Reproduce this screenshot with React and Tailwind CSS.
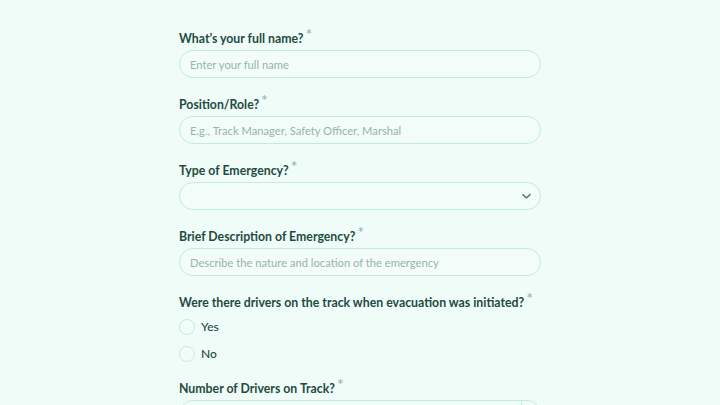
import React from "react";

const Label = ({ children }) => (
  <p className="h-[16px] text-[12.3px] leading-[16px] font-bold text-[#1f4b41] whitespace-nowrap">
    {children}
    <span className="relative top-[-3px] ml-[2px] text-[#8bb0a6] text-[16px] leading-none font-normal">*</span>
  </p>
);

const TextField = ({ placeholder }) => (
  <input
    className="block w-full h-[28px] rounded-full border border-[#c2ece1] bg-[#f2fdfa] px-[10px] text-[11.2px] text-[#1d4a40] placeholder:text-[#97b3ac] outline-none"
    placeholder={placeholder}
  />
);

const Field = ({ label, children }) => (
  <div className="flex flex-col gap-[5px]">
    <Label>{label}</Label>
    {children}
  </div>
);

function App() {
  return (
    <div
      className="h-[405px] overflow-hidden bg-[#effcf8] flex justify-center"
      style={{ fontFamily: "Lato, 'Noto Sans', sans-serif" }}
    >
      <form className="w-[362px] pt-[29px] flex flex-col gap-[17px]">
        <Field label="What’s your full name?">
          <TextField placeholder="Enter your full name" />
        </Field>

        <Field label="Position/Role?">
          <TextField placeholder="E.g., Track Manager, Safety Officer, Marshal" />
        </Field>

        <Field label="Type of Emergency?">
          <div className="relative">
            <div className="w-full h-[28px] rounded-full border border-[#c2ece1] bg-[#f2fdfa]" />
            <svg
              className="absolute right-[9px] top-[9px]"
              width="11"
              height="10"
              viewBox="0 0 12 10"
              fill="none"
              stroke="#5c7d76"
              strokeWidth="1.6"
              strokeLinecap="round"
              strokeLinejoin="round"
            >
              <path d="M2 3.5l4 3.5 4-3.5" />
            </svg>
          </div>
        </Field>

        <Field label="Brief Description of Emergency?">
          <TextField placeholder="Describe the nature and location of the emergency" />
        </Field>

        <div className="flex flex-col gap-[10px]">
          <Label>Were there drivers on the track when evacuation was initiated?</Label>
          <div className="flex flex-col gap-[11px]">
            {["Yes", "No"].map((o) => (
              <label key={o} className="flex items-center gap-[6px] h-[16px]">
                <span className="w-[16px] h-[16px] rounded-full border border-[#c2ece1] bg-[#f2fdfa]" />
                <span className="text-[12px] leading-[16px] font-medium text-[#1f4b41]">{o}</span>
              </label>
            ))}
          </div>
        </div>

        <Field label="Number of Drivers on Track?">
          <div className="w-full h-[28px] rounded-full border border-[#c2ece1] bg-[#f2fdfa] flex justify-end pr-[18px]">
            <div className="w-px h-full bg-[#c2ece1]" />
          </div>
        </Field>
      </form>
    </div>
  );
}

export default App;
